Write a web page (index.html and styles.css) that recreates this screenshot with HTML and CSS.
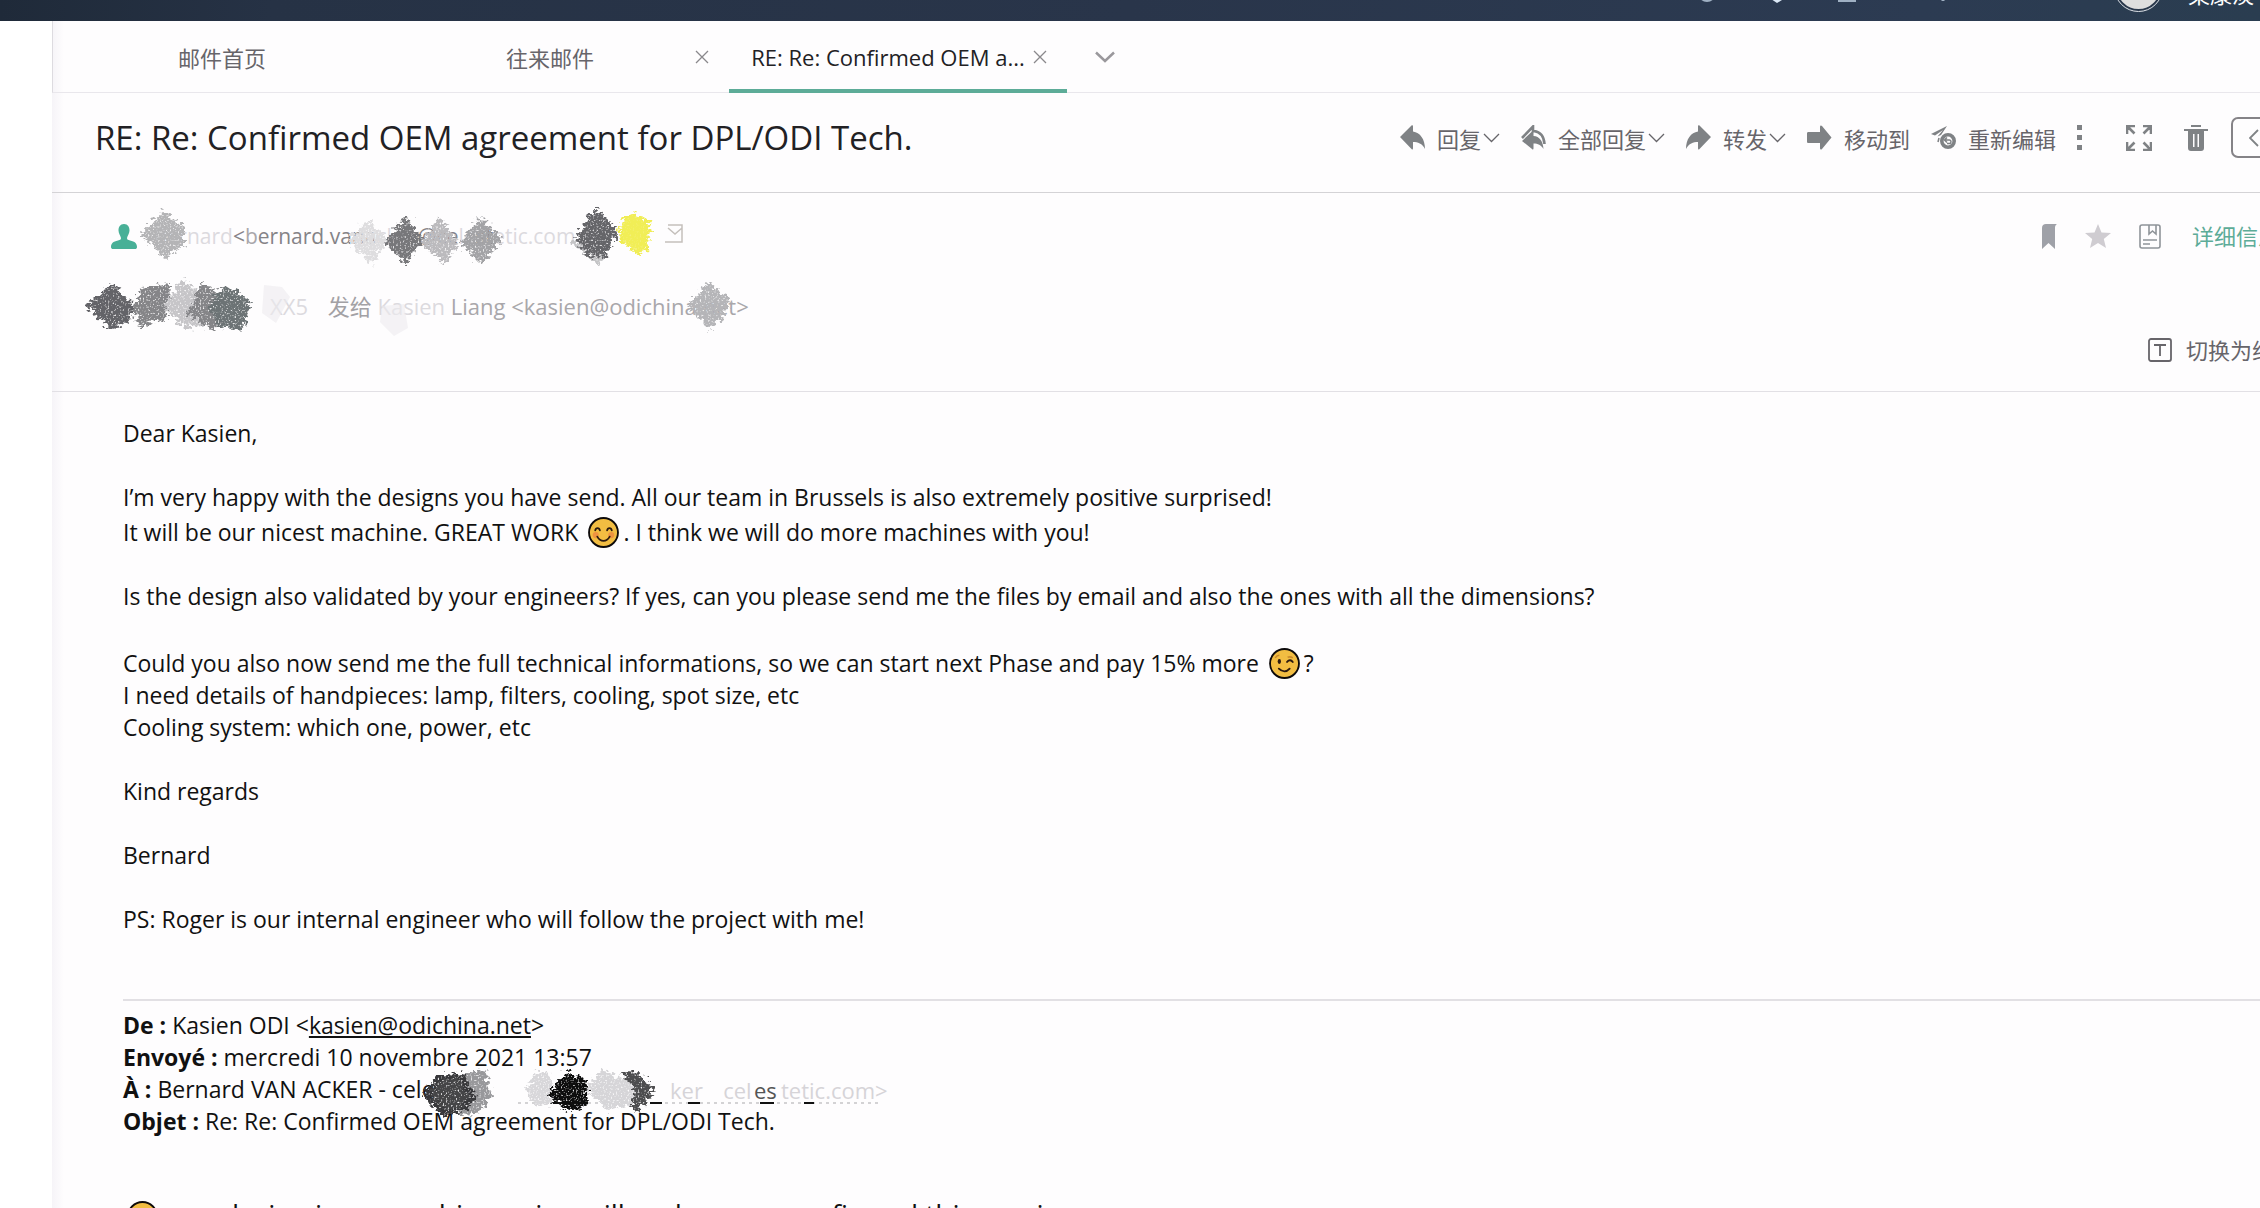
FILE: index.html
```html
<!DOCTYPE html>
<html lang="zh-CN">
<head>
    <meta charset="UTF-8">
    <meta name="viewport" content="width=device-width, initial-scale=1.0">
    <title>RE: Re: Confirmed OEM agreement for DPL/ODI Tech.</title>
    <link rel="stylesheet" href="styles.css">
</head>
<body>

    <!-- shared symbols -->
    <svg class="defs" width="0" height="0" aria-hidden="true">
        <defs>
            <filter id="pencil" x="-20%" y="-20%" width="140%" height="140%">
                <feTurbulence type="fractalNoise" baseFrequency="0.2 0.3" numOctaves="2" seed="4" result="n"/>
                <feDisplacementMap in="SourceGraphic" in2="n" scale="14" xChannelSelector="R" yChannelSelector="G" result="d"/>
                <feTurbulence type="fractalNoise" baseFrequency="0.6" numOctaves="1" seed="9" result="g"/>
                <feColorMatrix in="g" type="matrix" values="0 0 0 0 0  0 0 0 0 0  0 0 0 0 0  4 0 0 0 -0.8" result="m"/>
                <feComposite in="d" in2="m" operator="in"/>
            </filter>
            <symbol id="chevron" viewBox="0 0 17 10"><path d="M1 1l7.500 7.500L16 1" fill="none" stroke="currentColor" stroke-width="1.300"/></symbol>
            <symbol id="close" viewBox="0 0 14 14"><path d="M1 1l12 12M13 1L1 13" fill="none" stroke="currentColor" stroke-width="1.300"/></symbol>
            <symbol id="reply" viewBox="0 0 25 25"><path d="M0 12L11.500 0.500C12.500 0 13 0.500 13 1.500V6.500C20 7.500 25 14 25 24C22 18.500 18 17 13 17V23C13 24.500 12.500 25 11.500 24Z" fill="currentColor"/></symbol>
            <symbol id="smile" viewBox="0 0 30 30">
                <circle cx="15" cy="15" r="14" fill="#f2bd42" stroke="#0d0a0a" stroke-width="1.800"/>
                <circle cx="7.500" cy="17.500" r="3" fill="#ee9340"/><circle cx="22.500" cy="17.500" r="3" fill="#ee9340"/>
                <path d="M7 13c.5-3 4-3 4.500 0M18.500 13c.5-3 4-3 4.500 0M9 19c3 5.500 9 5.500 12 0" fill="none" stroke="#2c1a10" stroke-width="1.700" stroke-linecap="round"/>
            </symbol>
            <symbol id="wink" viewBox="0 0 30 30">
                <circle cx="15" cy="15" r="14" fill="#f2bd42" stroke="#0d0a0a" stroke-width="1.800"/>
                <ellipse cx="10" cy="13" rx="1.600" ry="2.400" fill="#2c1a10"/>
                <path d="M17.500 13.500c2-2.500 4-2 5.500 0M9.500 20c3.500 3.500 7.500 3.500 10.500 0" fill="none" stroke="#2c1a10" stroke-width="1.800" stroke-linecap="round"/>
                <path d="M6 9.500c1-1.500 2.500-2.500 4-2.500M18 9c2-.8 3.500-.5 5 .5" fill="none" stroke="#c98a2b" stroke-width="1.500"/>
            </symbol>
        </defs>
    </svg>

    <header class="topbar">
        <div class="topbar-row">
            <button class="top-btn" aria-label="客服"><svg width="20" height="20" viewBox="0 0 20 20"><circle cx="10" cy="10" r="8" fill="none" stroke="currentColor" stroke-width="2"/></svg></button>
            <button class="top-btn low" aria-label="电话"><svg width="20" height="20" viewBox="0 0 20 20"><path d="M0 6l5-4 10 15-5 3-6-4z" fill="currentColor"/></svg></button>
            <button class="top-btn" aria-label="消息"><svg width="20" height="20" viewBox="0 0 20 20"><path d="M2 2h16v16H2z" fill="none" stroke="currentColor" stroke-width="2"/></svg></button>
            <button class="top-btn last" aria-label="帮助"><svg width="20" height="20" viewBox="0 0 20 20"><path d="M10 3v15" stroke="currentColor" stroke-width="3"/></svg></button>
            <span class="avatar"></span>
            <span class="user-name">梁康淡</span>
        </div>
    </header>

    <main class="panel">
        <nav class="tabs">
            <a class="tab" href="#home"><span class="tab-text">邮件首页</span></a>
            <div class="tab">
                <a class="tab-text" href="#mails">往来邮件</a>
                <button class="tab-close" aria-label="关闭"><svg width="14" height="14"><use href="#close"/></svg></button>
            </div>
            <div class="tab active">
                <a class="tab-text" href="#mail">RE: Re: Confirmed OEM a...</a>
                <button class="tab-close" aria-label="关闭"><svg width="14" height="14"><use href="#close"/></svg></button>
            </div>
            <button class="tab-more" aria-label="更多标签"><svg width="20" height="12" viewBox="0 0 20 12"><path d="M1 1.500l9 8.500 9-8.500" fill="none" stroke="currentColor" stroke-width="2.500"/></svg></button>
        </nav>

        <div class="title-row">
            <h1>RE: Re: Confirmed OEM agreement for DPL/ODI Tech.</h1>
            <div class="actions">
                <button class="action"><svg width="25" height="25"><use href="#reply"/></svg><span>回复</span><svg class="arrow" width="17" height="10"><use href="#chevron"/></svg></button>
                <button class="action"><svg width="25" height="25" viewBox="0 0 25 25"><path d="M1 16L11 6.500c1-.8 1.500-.3 1.500.7V11c6 .5 9.500 5 10 13-2.500-4-5.500-5.500-10-5.500V23c0 1.500-.5 2-1.500 1z" fill="currentColor"/><path d="M1 13L12 1.500v6M13 6C20 7 23 12 23.500 19" fill="none" stroke="currentColor" stroke-width="2.600"/></svg><span>全部回复</span><svg class="arrow" width="17" height="10"><use href="#chevron"/></svg></button>
                <button class="action"><svg class="flip" width="25" height="25"><use href="#reply"/></svg><span>转发</span><svg class="arrow" width="17" height="10"><use href="#chevron"/></svg></button>
                <button class="action"><svg width="25" height="25" viewBox="0 0 25 25"><path d="M1.500 7H13V2c0-1.500 1-2 2-1l9.500 11.500L15 24c-1 1-2 .5-2-1v-5H1.500C.5 18 0 17.500 0 16.500v-8C0 7.500.5 7 1.500 7z" fill="currentColor"/></svg><span>移动到</span></button>
                <button class="action"><svg width="25" height="25" viewBox="0 0 25 25"><path d="M0 9L16 1l-6 9-3.500 1.500L12 5 4 10.500z" fill="currentColor"/><circle cx="17" cy="16" r="6.200" fill="none" stroke="currentColor" stroke-width="3.600"/><path d="M14 15h4.500c2 0 2 3.500 0 3.500H16M16 12.500L13.500 15l2.500 2.500" fill="none" stroke="currentColor" stroke-width="1.500"/><path d="M8 13l-1 4" stroke="currentColor" stroke-width="1.500"/></svg><span>重新编辑</span></button>
                <button class="action" aria-label="更多"><svg width="6" height="25" viewBox="0 0 6 25"><path d="M0 0h5v5H0zM0 10h5v5H0zM0 20h5v5H0z" fill="currentColor"/></svg></button>
                <button class="action expand" aria-label="全屏"><svg width="26" height="26" viewBox="0 0 26 26"><path d="M1 9V1h8M1 1l7.500 7.500M17 1h8v8M25 1l-7.500 7.500M1 17v8h8M1 25l7.500-7.500M25 17v8h-8M25 25l-7.500-7.500" fill="none" stroke="currentColor" stroke-width="2.600"/></svg></button>
                <button class="action trash" aria-label="删除"><svg width="24" height="26" viewBox="0 0 24 26"><path d="M7 1h10M0 5h24" stroke="currentColor" stroke-width="1.800"/><path fill-rule="evenodd" d="M4 6h16v17c0 2-1 3-3 3H7c-2 0-3-1-3-3zM9 9v13h1.500V9zM13.500 9v13H15V9z" fill="currentColor"/></svg></button>
                <button class="pager" aria-label="上一封"><svg width="10" height="18" viewBox="0 0 10 18"><path d="M9 1L1 9l8 8" fill="none" stroke="currentColor" stroke-width="1.800"/></svg></button>
            </div>
        </div>

        <section class="meta">
            <div class="meta-row">
                <svg class="person" width="26" height="25" viewBox="0 0 26 25"><path d="M13 0c4 0 5.500 3 5.500 6.500 0 3-2 5-2.500 7.500 0 1.500 1 2 3 2.500 5 1 7 3 7 6.500 0 1.500-1 2-2 2H2c-1 0-2-.5-2-2 0-3.500 2-5.500 7-6.500 2-.5 3-1 3-2.500-.5-2.500-2.500-4.500-2.500-7.500C7.500 3 9 0 13 0z" fill="#48b097"/></svg>
                <p class="sender"><span class="ghost">Bernard</span>&lt;<span class="dim">b</span>ernard.vana<span class="ghost">cker</span>@ce<span class="ghost">le</span>st<span class="ghost">etic.com</span></p>
                <div class="marks">
                    <button class="mark" aria-label="标记"><svg width="15" height="25" viewBox="0 0 15 25"><path d="M4 0h11c-1.500 1-2 2-2 4v21l-6.500-6L0 25V4c0-2.500 1.500-4 4-4z" fill="#9fa1a8"/></svg></button>
                    <button class="mark" aria-label="星标"><svg width="26" height="24" viewBox="0 0 26 24"><path d="M13 0l3.500 8.500 9.500.5-7.200 6L21 24l-8-5-8 5 2.200-9L0 9l9.500-.5z" fill="#cfccd1"/></svg></button>
                    <button class="mark" aria-label="备注"><svg width="22" height="25" viewBox="0 0 22 25"><rect x="1" y="1" width="20" height="23" rx="2" fill="none" stroke="#8f9499" stroke-width="1.600"/><path d="M10 1v9l3.500-3 3.500 3V1M4 16h14M4 20h7" fill="none" stroke="#8f9499" stroke-width="1.600"/></svg></button>
                    <a class="detail" href="#detail">详细信息</a>
                </div>
            </div>
            <p class="recipient"><span class="ghost">XX5</span> <span class="to">发给</span> <span class="ghost">Kasien</span> <span class="dim">Liang &lt;kasien@</span><span class="dim">odichina.net&gt;</span></p>
            <div class="switch-row">
                <button class="switch"><svg width="24" height="24" viewBox="0 0 24 24"><rect x="1" y="1" width="22" height="22" rx="2" fill="none" stroke="currentColor" stroke-width="1.800"/><path d="M6 7h12M12 7v11" stroke="currentColor" stroke-width="1.800"/></svg><span>切换为纯文本</span></button>
            </div>

            <!-- pencil strokes over the addresses -->
            <svg class="scribble" width="760" height="198" viewBox="52 193 760 198" aria-hidden="true">
                <g filter="url(#pencil)">
                    <path d="M163 211l21 16v19l-19 13-24-24z" fill="#b4b4b6"/>
                    <path d="M367 220l21 19-16 26-24-25z" fill="#dedddf"/>
                    <path d="M406 217l18 23-18 24-23-22z" fill="#77777a"/>
                    <path d="M439 217l20 26-14 22-25-22z" fill="#bbbabd"/>
                    <path d="M481 217l22 23-22 24-22-22z" fill="#a3a3a6"/>
                    <path d="M596 232l12 14-8 19-28-22z" fill="#c4c4c6"/>
                    <path d="M594 208l24 22-12 28-18-2-13-18z" fill="#656569"/>
                    <path d="M112 283l23 22-6 16-18 9-25-24z" fill="#646468"/>
                    <path d="M142 288l28-5-2 35-28 9-8-18z" fill="#858588"/>
                    <path d="M182 280l23 16-2 30-19 2-20-22z" fill="#c6c5c8"/>
                    <path d="M202 283l23 12v30l-15 5-22-16z" fill="#858588"/>
                    <path d="M226 285l25 16-9 30-22-4-13-20z" fill="#6c7375"/>
                    <path d="M708 281l22 20-6 15-14 13-22-22z" fill="#b5b5b8"/>
                </g>
                <path d="M631 212l10 4 10 8-4 26-8 4-18-12-2-18z" fill="#f0ed53" filter="url(#pencil)"/>
                <path d="M631 214l9 4 8 8-4 24-6 3-15-12-1-17z" fill="#f1ee58" opacity=".8"/>
                <path d="M382 306l22-2 4 24-14 8-14-14zM264 285l18 2 8 10-14 26-14-10z" fill="#edebef" opacity=".6"/>
                <path d="M668 225h14v17h-17M668 228l7 6 7-6" fill="none" stroke="#c5c0bc" stroke-width="1.500"/>
            </svg>
        </section>

        <article class="mail">
            <p>Dear Kasien,</p>
            <p>I’m very happy with the designs you have send. All our team in Brussels is also extremely positive surprised!<br>
            It will be our nicest machine. GREAT WORK <svg class="emoji" width="31" height="31"><use href="#smile"/></svg>. I think we will do more machines with you!</p>
            <p>Is the design also validated by your engineers? If yes, can you please send me the files by email and also the ones with all the dimensions?</p>
            <p>Could you also now send me the full technical informations, so we can start next Phase and pay 15% more <svg class="emoji" width="31" height="31"><use href="#wink"/></svg>?<br>
            I need details of handpieces: lamp, filters, cooling, spot size, etc<br>
            Cooling system: which one, power, etc</p>
            <p>Kind regards</p>
            <p>Bernard</p>
            <p>PS: Roger is our internal engineer who will follow the project with me!</p>

            <div class="quoted">
                <p><b>De :</b> Kasien ODI &lt;<a href="mailto:kasien@odichina.net">kasien@odichina.net</a>&gt;<br>
                <b>Envoyé :</b> mercredi 10 novembre 2021 13:57<br>
                <b>À :</b> Bernard VAN ACKER - cel<span class="masked">e<svg class="scribble" width="470" height="54" viewBox="424 1062 470 54" aria-hidden="true">
                    <path d="M520 1101H880" stroke="#a9a8ab" stroke-width="1" stroke-dasharray="3 4"/>
                    <path d="M552 1101h38M652 1101h12M690 1101h12M762 1101h14M806 1101h10" stroke="#111" stroke-width="2"/>
                    <text class="mask-text" x="672" y="1097">kerᅠcel</text>
                    <text class="mask-text strong" x="756" y="1097">es</text>
                    <text class="mask-text" x="783" y="1097">tetic.com&gt;</text>
                    <g filter="url(#pencil)">
                        <path d="M466 1072l20-4 8 24-12 18-20 4-6-30z" fill="#98989b"/>
                        <path d="M440 1074l24-4 14 24-10 14-24 6-20-22z" fill="#37373a"/>
                        <path d="M442 1078l18-2 12 18-8 12-16 4-16-18z" fill="#444447"/>
                        <path d="M536 1072l16-2 2 32-16 2-10-16z" fill="#d8d7da"/>
                        <path d="M568 1070l20 6 2 26-18 8-22-18z" fill="#0e0e10"/>
                        <path d="M568 1074l16 6v20l-14 6-14-16z" fill="#0e0e10"/>
                        <path d="M604 1066l34 18v18l-28 6-22-20z" fill="#d6d5d8"/>
                        <path d="M636 1068l22 20-20 22-6-8 6-14-14-14z" fill="#4d4d50"/>
                    </g>
                </svg></span><br>
                <b>Objet :</b> Re: Re: Confirmed OEM agreement for DPL/ODI Tech.</p>
            </div>

            <p class="reply-text"><svg class="emoji" width="31" height="31"><use href="#smile"/></svg> our design is on machine going will and we are confirmed this coming</p>
        </article>
    </main>

</body>
</html>
```
FILE: styles.css
```css
:root {
    --accent: #5dac98;
    --text: #222124;
    --muted: #67656a;
    --icon: #7f8285;
    --line: #d4d3d6;
    --ui-font: "Open Sans", "Noto Sans CJK SC", sans-serif;
}

* {
    box-sizing: border-box;
}

body {
    margin: 0;
    height: 100vh;
    overflow: hidden;
    background-color: #fff;
    color: var(--text);
    font-family: var(--ui-font);
    font-size: 22px;
}

h1, p {
    margin: 0;
    font-weight: normal;
}

button {
    padding: 0;
    border: 0;
    background: none;
    color: inherit;
    font: inherit;
    cursor: pointer;
}

a {
    color: inherit;
    text-decoration: none;
}

svg {
    display: block;
    flex-shrink: 0;
}

.defs {
    position: absolute;
}

/* top bar */
.topbar {
    height: 21px;
    overflow: hidden;
    background: linear-gradient(90deg, #1f2a39, #263245 12%, #29354a 50%, #2c3b52 85%, #2a3d50);
}

.topbar-row {
    display: flex;
    justify-content: flex-end;
    align-items: flex-end;
    height: 68px;
    margin-top: -47px;
    padding: 0 6px 10px 0;
    color: #fff;
}

.top-btn {
    margin: 0 50px 8px 0;
    color: #9fb0c3;
}

.top-btn.low {
    color: #dbe9f6;
}

.top-btn.last {
    margin: 0 162px 8px 26px;
}

.avatar {
    width: 47px;
    height: 47px;
    margin-right: 26px;
    border: 2px solid #2a384c;
    border-radius: 50%;
    outline: 1px solid #dfe3e8;
    background-color: #dedede;
}

.user-name {
    line-height: 34px;
}

/* panel and tabs */
.panel {
    margin-left: 52px;
    height: calc(100vh - 21px);
    overflow: hidden;
    background: linear-gradient(90deg, #f6f4f8, #fefdfe 12px);
}

.tabs {
    display: flex;
    height: 72px;
    border-bottom: 1px solid #e9e7ec;
    border-left: 1px solid #dddbe0;
    color: var(--muted);
}

.tab {
    display: flex;
    align-items: center;
    width: 338px;
    height: 72px;
    padding: 0 20px;
    border-bottom: 4px solid transparent;
}

.tab.active {
    border-bottom-color: var(--accent);
    color: var(--text);
}

.tab-text {
    flex: 1;
    text-align: center;
    white-space: nowrap;
    padding-top: 4px;
}

.tab-close {
    margin: 4px 0 0 6px;
    color: #8a888c;
}

.tab-more {
    margin-left: 28px;
    color: #9a989c;
}

/* subject and actions */
.title-row {
    display: flex;
    align-items: center;
    justify-content: space-between;
    height: 100px;
    padding: 0 0 10px 43px;
    border-bottom: 1px solid var(--line);
}

h1 {
    font-size: 33px;
    white-space: nowrap;
}

.actions {
    display: flex;
    align-items: center;
    gap: 21px;
    margin-right: -51px;
    color: var(--icon);
}

.action {
    display: flex;
    align-items: center;
    gap: 12px;
    white-space: nowrap;
}

.action span {
    color: var(--muted);
}

.action .arrow {
    margin-left: -10px;
    color: var(--muted);
}

.flip {
    transform: scaleX(-1);
}

.expand {
    margin-left: 22px;
}

.trash {
    margin: 0 2px 0 11px;
}

.pager {
    width: 80px;
    height: 41px;
    padding-left: 16px;
    border: 2px solid #858387;
    border-radius: 7px;
}

/* sender block */
.meta {
    position: relative;
    height: 199px;
    padding: 26px 0 0 36px;
    border-bottom: 1px solid #e2e0e5;
}

.meta-row {
    display: flex;
    align-items: center;
    height: 34px;
    padding-left: 23px;
}

.sender {
    margin-left: 16px;
    line-height: 34px;
    color: #858387;
    font-size: 21px;
}

.ghost {
    color: #dcdade;
}

.dim {
    color: #a9a7ab;
}

.recipient {
    margin-top: 36px;
    padding-left: 182px;
    line-height: 34px;
    font-size: 22px;
}

.to {
    margin-left: 14px;
    color: #a3a1a5;
}

.marks {
    display: flex;
    align-items: center;
    margin: 0 -20px 0 auto;
}

.mark {
    margin-right: 28px;
}

.detail {
    margin-left: 3px;
    line-height: 30px;
    color: var(--accent);
    white-space: nowrap;
}

.switch-row {
    display: flex;
    justify-content: flex-end;
    margin: 10px -58px 0 0;
    color: var(--muted);
}

.switch {
    display: flex;
    align-items: center;
    gap: 14px;
    line-height: 34px;
    white-space: nowrap;
}

.scribble {
    position: absolute;
    top: 0;
    left: 0;
    pointer-events: none;
}

/* message */
.mail {
    padding: 25px 0 0 71px;
    color: #111;
    font-size: 23px;
    line-height: 32px;
}

.mail p {
    margin-bottom: 32px;
    white-space: nowrap;
}

.emoji {
    display: inline-block;
    margin: 4px 4px 0;
    vertical-align: -7px;
}

.quoted {
    margin-top: 64px;
    border-top: 2px solid #e2e0e4;
    padding-top: 8px;
}

.quoted a {
    text-decoration: underline;
}

.masked {
    position: relative;
}

.masked .scribble {
    top: -9px;
}

.mask-text {
    fill: #d6d4d8;
    font-size: 22px;
}

.mask-text.strong {
    fill: #555;
}

.mail .reply-text {
    margin-top: 60px;
    font-size: 28px;
}
```
